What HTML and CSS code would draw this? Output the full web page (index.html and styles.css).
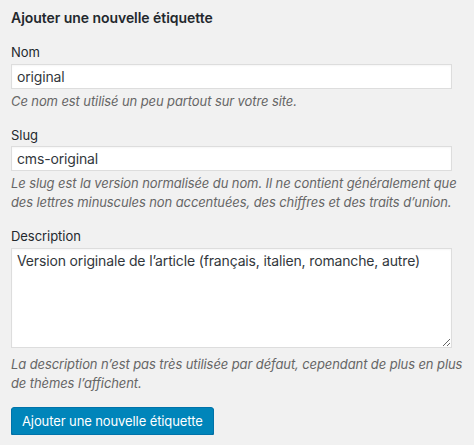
FILE: index.html
```html
<!DOCTYPE html>
<html lang="fr">
<head>
<meta charset="utf-8">
<link rel="stylesheet" href="styles.css">
</head>
<body>
<div class="form-wrap">
  <h2 class="title">Ajouter une nouvelle étiquette</h2>
  <div class="field">
    <label class="label">Nom</label>
    <input class="input" type="text" value="original">
    <p class="help">Ce nom est utilisé un peu partout sur votre site.</p>
  </div>
  <div class="field">
    <label class="label">Slug</label>
    <input class="input" type="text" value="cms-original">
    <p class="help">Le slug est la version normalisée du nom. Il ne contient généralement que des lettres minuscules non accentuées, des chiffres et des traits d’union.</p>
  </div>
  <div class="field">
    <label class="label">Description</label>
    <textarea class="textarea">Version originale de l’article (français, italien, romanche, autre)</textarea>
    <p class="help help-after-area">La description n’est pas très utilisée par défaut, cependant de plus en plus de thèmes l’affichent.</p>
  </div>
  <button class="button" type="button">Ajouter une nouvelle étiquette</button>
</div>
</body>
</html>
```
FILE: styles.css
```css
html, body {
  margin: 0;
  padding: 0;
  background: #f1f1f1;
}
body {
  font-family: Inter, "Noto Sans", sans-serif;
  color: #23282d;
  font-size: 13px;
}
.form-wrap {
  width: 463px;
  padding: 8px 0 0 11px;
  display: flex;
  flex-direction: column;
  align-items: flex-start;
}
.title {
  margin: 0 0 14px;
  font-size: 14px;
  font-weight: 600;
  line-height: 20px;
  letter-spacing: -0.05px;
}
.field {
  display: flex;
  flex-direction: column;
  align-items: flex-start;
  width: 100%;
  margin-bottom: 14px;
}
.label {
  font-size: 13px;
  line-height: 20px;
  margin-bottom: 1.5px;
  letter-spacing: -0.05px;
}
.input, .textarea {
  box-sizing: border-box;
  width: 441px;
  margin: 0;
  border: 1px solid #dddddd;
  background: #fff;
  color: #32373c;
  font-family: inherit;
  font-size: 14px;
  letter-spacing: -0.15px;
  padding: 0 5px;
  outline: none;
  box-shadow: inset 0 1px 2px rgba(0,0,0,0.04);
}
.input {
  height: 25px;
}
.textarea {
  height: 100px;
  padding: 2px 5px;
  line-height: 20px;
  resize: vertical;
}
.help {
  margin: 3px 0 0;
  font-style: italic;
  color: #666;
  font-size: 13px;
  line-height: 19px;
  letter-spacing: -0.1px;
}
.help-after-area {
  margin-top: 7px;
}
.button {
  height: 28px;
  padding: 0 10px 1px;
  border: 1px solid #0073aa;
  border-radius: 3px;
  background: #0085ba;
  box-shadow: 0 1px 0 #006799;
  color: #fff;
  font-family: inherit;
  font-size: 13px;
  letter-spacing: -0.1px;
  line-height: 26px;
  cursor: pointer;
}
```
